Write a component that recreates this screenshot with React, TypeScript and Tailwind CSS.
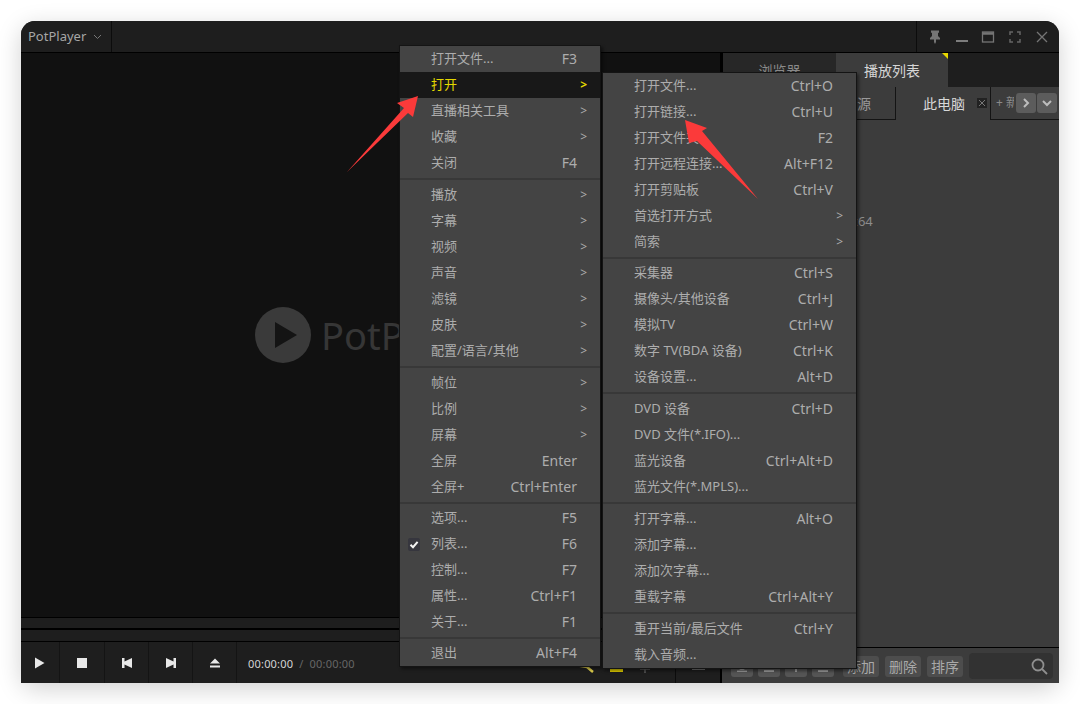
import React from "react";

const FONT = "font-['Noto_Sans','Noto_Sans_CJK_SC',sans-serif]";
type Item = { t?: string; k?: string; sub?: boolean; hot?: boolean; check?: boolean; sep?: string };

const main: Item[] = [
  { t: "打开文件...", k: "F3" },
  { t: "打开", sub: true, hot: true },
  { t: "直播相关工具", sub: true },
  { t: "收藏", sub: true },
  { t: "关闭", k: "F4" },
  { sep: "h-[6px]" },
  { t: "播放", sub: true },
  { t: "字幕", sub: true },
  { t: "视频", sub: true },
  { t: "声音", sub: true },
  { t: "滤镜", sub: true },
  { t: "皮肤", sub: true },
  { t: "配置/语言/其他", sub: true },
  { sep: "h-[6px]" },
  { t: "帧位", sub: true },
  { t: "比例", sub: true },
  { t: "屏幕", sub: true },
  { t: "全屏", k: "Enter" },
  { t: "全屏+", k: "Ctrl+Enter" },
  { sep: "h-[5px]" },
  { t: "选项...", k: "F5" },
  { t: "列表...", k: "F6", check: true },
  { t: "控制...", k: "F7" },
  { t: "属性...", k: "Ctrl+F1" },
  { t: "关于...", k: "F1" },
  { sep: "h-[5px]" },
  { t: "退出", k: "Alt+F4" },
];

const sub: Item[] = [
  { t: "打开文件...", k: "Ctrl+O" },
  { t: "打开链接...", k: "Ctrl+U" },
  { t: "打开文件夹...", k: "F2" },
  { t: "打开远程连接...", k: "Alt+F12" },
  { t: "打开剪贴板", k: "Ctrl+V" },
  { t: "首选打开方式", sub: true },
  { t: "简索", sub: true },
  { sep: "h-[5px]" },
  { t: "采集器", k: "Ctrl+S" },
  { t: "摄像头/其他设备", k: "Ctrl+J" },
  { t: "模拟TV", k: "Ctrl+W" },
  { t: "数字 TV(BDA 设备)", k: "Ctrl+K" },
  { t: "设备设置...", k: "Alt+D" },
  { sep: "h-[6px]" },
  { t: "DVD 设备", k: "Ctrl+D" },
  { t: "DVD 文件(*.IFO)..." },
  { t: "蓝光设备", k: "Ctrl+Alt+D" },
  { t: "蓝光文件(*.MPLS)..." },
  { sep: "h-[6px]" },
  { t: "打开字幕...", k: "Alt+O" },
  { t: "添加字幕..." },
  { t: "添加次字幕..." },
  { t: "重载字幕", k: "Ctrl+Alt+Y" },
  { sep: "h-[6px]" },
  { t: "重开当前/最后文件", k: "Ctrl+Y" },
  { t: "载入音频..." },
];

function Row({ it, arrow }: { it: Item; arrow: string }) {
  if (it.sep) {
    return (
      <div className={`${it.sep} flex items-center`}>
        <div className="h-[2px] w-full bg-[#383838]" />
      </div>
    );
  }
  return (
    <div
      className={`relative flex h-[26px] items-center pl-[31px] text-[13px] ${
        it.hot ? "bg-[#181818] text-[#e4d800]" : "text-[#adadad]"
      }`}
    >
      {it.check && (
        <svg className="absolute left-[8px] top-[7px]" width="12" height="13" viewBox="0 0 12 13">
          <rect width="12" height="13" rx="2" fill="#36363e" />
          <path d="M2.500 6.700 5 9.200 9.600 3.800" fill="none" stroke="#f2f2f2" strokeWidth="2" />
        </svg>
      )}
      <span className="whitespace-nowrap">{it.t}</span>
      {it.k && <span className="ml-auto whitespace-nowrap pb-[2px] pr-[23px] text-[14px]">{it.k}</span>}
      {it.sub && <span className={`ml-auto text-[12px] ${arrow} ${it.hot ? "font-bold" : ""}`}>&gt;</span>}
    </div>
  );
}

function Menu({ items, cls, arrow }: { items: Item[]; cls: string; arrow: string }) {
  return (
    <div className={`absolute border border-[#141414] bg-[#444444] shadow-[2px_2px_3px_rgba(0,0,0,0.45)] ${cls}`}>
      {items.map((it, i) => (
        <Row key={i} it={it} arrow={arrow} />
      ))}
    </div>
  );
}

function Transport({ w, children }: { w: string; children: React.ReactNode }) {
  return (
    <div className={`flex h-full shrink-0 items-center justify-center border-r border-[#141414] text-[#e8e8e8] ${w}`}>
      <svg width="14" height="14" viewBox="0 0 14 14" fill="currentColor">
        {children}
      </svg>
    </div>
  );
}

function Small({ children }: { children: string }) {
  return (
    <div className="flex h-[21px] items-center rounded-[3px] bg-[#4d4d4d] px-[4px] text-[14px] text-[#a9a9a9]">
      {children}
    </div>
  );
}

function Square({ children }: { children: React.ReactNode }) {
  return (
    <div className="flex h-[21px] w-[22px] items-end justify-center rounded-[3px] bg-[#555555] pb-[5px]">
      {children}
    </div>
  );
}

export default function App() {
  return (
    <div className={`h-[704px] w-[1080px] overflow-hidden bg-white p-[21px] ${FONT}`}>
      <div className="relative flex h-[662px] w-[1038px] flex-col rounded-[14px] bg-[#1e1e1e] shadow-[0_6px_24px_rgba(0,0,0,0.18)]">
        {/* title bar */}
        <div className="flex h-[32px] shrink-0 items-stretch rounded-t-[14px] border-b border-black bg-[#1e1e1e]">
          <div className="flex w-[91px] items-center gap-[7px] border-r border-[#0c0c0c] pl-[7px] text-[13px] text-[#a6a6a6]">
            PotPlayer
            <svg width="9" height="6" viewBox="0 0 9 6" fill="none" stroke="#777" strokeWidth="1">
              <path d="M1 1l3.500 3.500L8 1" />
            </svg>
          </div>
          <div className="flex-1" />
          <div className="flex w-[143px] items-center gap-[10.7px] border-l border-[#0c0c0c] pl-[10px]">
            <svg width="16" height="16" viewBox="0 0 16 16" fill="#757575">
              <path d="M4 1.500h8v2.200h-1V7l2 2v1.500H9V13l-1 2-1-2v-2.500H3V9l2-2V3.700H4z" />
            </svg>
            <svg width="16" height="16" viewBox="0 0 16 16" fill="#7d7d7d">
              <rect x="2" y="11" width="12" height="2" />
            </svg>
            <svg width="16" height="16" viewBox="0 0 16 16" fill="none" stroke="#757575" strokeWidth="1.300">
              <rect x="2.500" y="3" width="11" height="10" />
              <path d="M2.500 4.500h11" strokeWidth="2.500" />
            </svg>
            <svg width="16" height="16" viewBox="0 0 16 16" fill="none" stroke="#666666" strokeWidth="1.500">
              <path d="M3 6V3h3M10 3h3v3M13 10v3h-3M6 13H3v-3" />
            </svg>
            <svg width="16" height="16" viewBox="0 0 16 16" fill="none" stroke="#757575" strokeWidth="1.300">
              <path d="M3 3l10 10M13 3L3 13" />
            </svg>
          </div>
        </div>

        <div className="flex min-h-0 flex-1">
          {/* left: video + controls */}
          <div className="flex w-[701px] shrink-0 flex-col border-r-[2px] border-black">
            <div className="flex flex-1 items-center bg-[#111111]">
              <div className="flex w-full items-center overflow-hidden pl-[234px]">
                <svg width="56" height="56" viewBox="0 0 56 56">
                  <circle cx="28" cy="28" r="28" fill="#3a3a3a" />
                  <path d="M20 15 42 28 20 41z" fill="#141414" />
                </svg>
                <span className="ml-[10px] text-[38px] leading-none text-[#363636]">PotPlayer</span>
              </div>
            </div>
            <div className="h-[11px] shrink-0 border-t border-black bg-[#1e1e1e]" />
            <div className="h-[2px] shrink-0 bg-black" />
            <div className="h-[11px] shrink-0 bg-[#1e1e1e]" />
            <div className="flex h-[42px] shrink-0 items-center border-t border-black bg-[#1e1e1e]">
              <Transport w="w-[39px]">
                <path d="M2 1.500 11.500 7 2 12.500z" />
              </Transport>
              <Transport w="w-[45px]">
                <rect x="2" y="2" width="10" height="10" />
              </Transport>
              <Transport w="w-[44px]">
                <path d="M2 2h2.500v3.600L12 2v10L4.500 8.400V12H2z" />
              </Transport>
              <Transport w="w-[44px]">
                <path d="M12 2H9.500v3.600L2 2v10l7.500-3.600V12H12z" />
              </Transport>
              <Transport w="w-[44px]">
                <path d="M7 2.500 12 7.500H2zM2 9.500h10v2H2z" />
              </Transport>
              <div className="ml-[11px] flex items-center gap-[6px] pt-[3px] text-[11px] tracking-[0.2px]">
                <span className="text-[#d4d4d4]">00:00:00</span>
                <span className="text-[#666]">/</span>
                <span className="text-[#666]">00:00:00</span>
              </div>
              <svg className="ml-auto mr-[20px] shrink-0" width="80" height="41" viewBox="0 0 80 41">
                <path d="M0 23 12 25 18 30" fill="none" stroke="#d8c84a" strokeWidth="2.500" />
                <rect x="35" y="25" width="13" height="5" fill="#e4d000" />
                <path d="M70 24v7M65 27h10" fill="none" stroke="#5c5c5c" strokeWidth="1.500" />
              </svg>
              <div className="relative h-full w-[45px] shrink-0 border-l border-[#0c0c0c]">
                <div className="absolute left-[16px] top-[26px] h-[2px] w-[13px] bg-[#6f6f6f]" />
              </div>
            </div>
          </div>

          {/* right: playlist */}
          <div className="flex min-w-0 flex-1 flex-col bg-[#3c3c3c]">
            <div className="flex h-[34px] shrink-0 bg-[#1e1e1e] text-[14px]">
              <div className="flex w-[114px] items-center justify-center border-l border-black bg-[#272727] text-[#8a8a8a]">
                浏览器
              </div>
              <div className="relative flex w-[112px] items-center justify-center bg-[#3c3c3c] text-[#d6d6d6]">
                播放列表
                <div className="absolute right-0 top-0 h-0 w-0 border-l-[6px] border-t-[6px] border-l-transparent border-t-[#e8d800]" />
              </div>
            </div>
            <div className="flex h-[33px] shrink-0 items-stretch bg-[#3c3c3c] text-[14px] text-[#9a9a9a]">
              <div className="flex w-[174px] items-center justify-end border-r border-b border-[#141414] pr-[24px]">媒体源</div>
              <div className="flex w-[94px] items-center pb-[1px] pl-[27px] text-[#d8d8d8]">
                此电脑
                <svg className="ml-[12px]" width="10" height="10" viewBox="0 0 10 10">
                  <rect width="10" height="10" fill="#222222" />
                  <path d="M2 2l6 6M8 2 2 8" stroke="#777" strokeWidth="1" />
                </svg>
              </div>
              <div className="flex min-w-0 flex-1 items-center border-l border-b border-[#141414] pl-[5px] text-[12px]">
                <span className="mr-[2px] w-[18px] shrink-0 overflow-hidden whitespace-nowrap text-[#8a8a8a]">+ 新建</span>
                <div className="flex h-[20px] w-[20px] shrink-0 items-center justify-center rounded-[3px] bg-[#5c5c5c]">
                  <svg width="10" height="12" viewBox="0 0 10 12" fill="none" stroke="#bdbdbd" strokeWidth="2">
                    <path d="M3 2l4 4-4 4" />
                  </svg>
                </div>
                <div className="ml-[1px] flex h-[20px] w-[20px] shrink-0 items-center justify-center rounded-[3px] bg-[#5c5c5c]">
                  <svg width="12" height="10" viewBox="0 0 12 10" fill="none" stroke="#bdbdbd" strokeWidth="2">
                    <path d="M2 3l4 4 4-4" />
                  </svg>
                </div>
              </div>
            </div>
            <div className="flex-1 pl-[129px] pt-[92px] text-[13px] text-[#8c8c8c]">x64</div>
            <div className="flex h-[36px] shrink-0 items-center border-t border-black pl-[9px] pr-[6px] pt-[1px]">
              <div className="flex gap-[5px]">
                <Square>
                  <svg width="12" height="4" viewBox="0 0 12 4" fill="#9a9a9a">
                    <path d="M6 0 9 2H3zM1 2.500h10V4H1z" />
                  </svg>
                </Square>
                <Square>
                  <svg width="12" height="4" viewBox="0 0 12 4" fill="#9a9a9a">
                    <path d="M1 2h10v2H1z" />
                  </svg>
                </Square>
                <Square>
                  <svg width="2" height="4" viewBox="0 0 2 4" fill="#9a9a9a">
                    <path d="M0 0h2v4H0z" />
                  </svg>
                </Square>
                <Square>
                  <svg width="12" height="2" viewBox="0 0 12 2" fill="#9a9a9a">
                    <path d="M1 0h10v2H1z" />
                  </svg>
                </Square>
              </div>
              <div className="ml-[9px] flex gap-[6px]">
                <Small>添加</Small>
                <Small>删除</Small>
                <Small>排序</Small>
              </div>
              <div className="ml-[6px] flex h-[26px] flex-1 items-center justify-end rounded-[4px] bg-[#323232] pr-[5px]">
                <svg width="17" height="17" viewBox="0 0 17 17" fill="none" stroke="#8f8f8f" strokeWidth="1.800">
                  <circle cx="7" cy="7" r="5.500" />
                  <path d="M11 11l5 5" />
                </svg>
              </div>
            </div>
          </div>
        </div>

        <Menu items={main} cls="left-[378px] top-[24px] w-[202px]" arrow="pr-[13px]" />
        <Menu items={sub} cls="left-[581px] top-[51px] w-[255px]" arrow="pr-[13px]" />

        <svg className="pointer-events-none absolute left-0 top-0" width="1038" height="662" viewBox="21 21 1038 662">
          <polygon points="347,172 404,108 397,103 418,96 413,117 408,113" fill="#fb3a3a" />
          <polygon points="758,199 697,141 689,143 685,120 707,128 702,131" fill="#fb3a3a" />
        </svg>
      </div>
    </div>
  );
}
